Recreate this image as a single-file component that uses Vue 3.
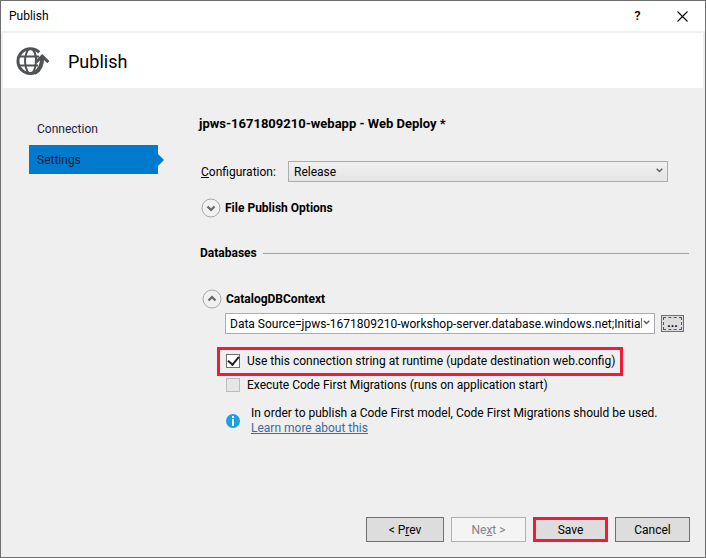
<template>
	<div class="dialog">
		<div class="titlebar">
			<span class="caption">Publish</span>
			<button class="caption_btn" type="button" aria-label="Help">?</button>
			<button class="caption_btn" type="button" aria-label="Close">
				<svg width="11" height="11" viewBox="0 0 11 11">
					<path d="M.5.5l10 10M10.5.5l-10 10" fill="none" stroke="#000" stroke-width="1.1" />
				</svg>
			</button>
		</div>

		<header class="banner">
			<svg class="globe" width="34" height="30" viewBox="0 0 34 30" fill="none" stroke="#505254">
				<path d="M23.200 6.400A12.400 12.400 0 1 0 23 24" stroke-width="3" />
				<path d="M12.500 3c-4.600 7-4.600 17 0 24M16.500 3c2.400 2.600 3.200 5 3.400 9M16.500 27c2.400-3 3.600-7 3.500-15" stroke-width="2" />
				<path d="M3 10.500h20M3 19.500h19" stroke-width="2" />
				<path d="M18.500 27c5.500-3 7.700-8 7.700-15.500" stroke-width="4" />
				<path d="M20 16.200l6.200-6 6.200 6" stroke-width="3" />
			</svg>
			<h1>Publish</h1>
		</header>

		<div class="body">
			<nav class="sidebar">
				<a
					v-for="page in pages"
					:key="page"
					href="#"
					:class="{ active: page === current }"
					@click.prevent="current = page"
				>{{ page }}</a>
			</nav>

			<main class="content">
				<h2>jpws-1671809210-webapp - Web Deploy *</h2>

				<div class="config_row">
					<label for="configuration"><u>C</u>onfiguration:</label>
					<div class="combo shaded">
						<select id="configuration" v-model="configuration">
							<option>Release</option>
							<option>Debug</option>
						</select>
						<svg class="arrow" width="7" height="5" viewBox="0 0 7 5">
							<path d="M.7.8l2.800 2.800L6.300.8" fill="none" stroke="#606060" stroke-width="1.400" />
						</svg>
					</div>
				</div>

				<button class="expander" type="button">
					<svg width="20" height="20" viewBox="0 0 20 20" fill="none">
						<circle cx="10" cy="10" r="9" fill="#f1f1f1" stroke="#a9a9a9" />
						<path d="M6.500 8.500l3.500 3.500 3.500-3.500" stroke="#666" stroke-width="2.200" />
					</svg>
					File Publish Options
				</button>

				<div class="group_title">
					<h3>Databases</h3>
					<hr />
				</div>

				<section class="database">
					<button class="expander" type="button">
						<svg width="20" height="20" viewBox="0 0 20 20" fill="none">
							<circle cx="10" cy="10" r="9" fill="#f1f1f1" stroke="#a9a9a9" />
							<path d="M6.500 11.500L10 8l3.500 3.500" stroke="#666" stroke-width="2.200" />
						</svg>
						CatalogDBContext
					</button>

					<div class="connection_row">
						<div class="combo">
							<select v-model="connection" aria-label="Connection string">
								<option>{{ connection }}</option>
							</select>
							<svg class="arrow" width="7" height="5" viewBox="0 0 7 5">
								<path d="M.7.8l2.800 2.800L6.300.8" fill="none" stroke="#606060" stroke-width="1.400" />
							</svg>
						</div>
						<button class="browse" type="button"><span>...</span></button>
					</div>

					<label class="check marked">
						<input v-model="useAtRuntime" type="checkbox" />
						Use this connection string at runtime (update destination web.config)
					</label>
					<label class="check">
						<input type="checkbox" disabled />
						Execute Code First Migrations (runs on application start)
					</label>

					<div class="info">
						<svg width="14" height="14" viewBox="0 0 14 14">
							<circle cx="7" cy="7" r="7" fill="#1ba1e2" />
							<path d="M6 2h2v2H6zM6 5h2v7H6z" fill="#fff" />
						</svg>
						<div>
							<p>In order to publish a Code First model, Code First Migrations should be used.</p>
							<a href="#">Learn more about this</a>
						</div>
					</div>
				</section>
			</main>
		</div>

		<footer class="actions">
			<button class="prev" type="button">&lt; P<u>r</u>ev</button>
			<button type="button" disabled>Ne<u>x</u>t &gt;</button>
			<button class="save" type="button">Save</button>
			<button type="button">Cancel</button>
		</footer>
	</div>
</template>

<script setup>
import { ref } from 'vue';

const pages = ['Connection', 'Settings'];
const current = ref('Settings');
const configuration = ref('Release');
const connection = ref('Data Source=jpws-1671809210-workshop-server.database.windows.net;Initial');
const useAtRuntime = ref(true);
</script>

<style>
body {
	margin: 0;
}
</style>

<style scoped>
* {
	box-sizing: border-box;
}

.dialog {
	min-height: 100vh;
	display: flex;
	flex-direction: column;
	border: 1px solid #6e6e6e;
	background: #efefef;
	color: #000;
	font-family: 'Segoe UI', Roboto, sans-serif;
	font-size: 12px;
	line-height: 16px;
}

button,
select {
	font: inherit;
	color: inherit;
}

h1,
h2,
h3,
p {
	margin: 0;
}

.titlebar {
	height: 30px;
	display: flex;
	align-items: center;
	padding-left: 8px;
	background: #fff;
}

.caption {
	flex: 1;
}

.caption_btn {
	width: 45px;
	height: 30px;
	padding: 0;
	border: 0;
	background: none;
	display: flex;
	align-items: center;
	justify-content: center;
	font-size: 13px;
	font-weight: 500;
}

.banner {
	height: 55px;
	margin: 2px 2px 0;
	display: flex;
	align-items: center;
	gap: 18px;
	padding-left: 13px;
	background: #fff;
}

.banner h1 {
	padding-top: 2px;
	font-size: 18px;
	line-height: 24px;
	font-weight: 400;
}

.body {
	flex: 1;
	display: flex;
	gap: 41px;
	padding: 26px 16px 0 28px;
}

.sidebar {
	flex: none;
	width: 129px;
}

.sidebar a {
	display: block;
	position: relative;
	padding: 7px 8px 8px;
	color: #1e1e3c;
	text-decoration: none;
}

.sidebar a.active {
	padding: 7px 8px 6px;
	background: #007acc;
}

.sidebar a.active::after {
	content: '';
	position: absolute;
	left: 100%;
	top: 9px;
	border: 6px solid transparent;
	border-left-color: #007acc;
	border-right: 0;
}

.content {
	flex: 1;
	min-width: 0;
}

.content h2 {
	font-size: 13px;
	line-height: 20px;
	font-weight: 700;
}

.config_row {
	display: flex;
	align-items: center;
	margin: 27px 21px 0 2px;
}

.config_row label {
	width: 87px;
}

.combo {
	position: relative;
	flex: 1;
	min-width: 0;
	height: 21px;
}

.combo select {
	appearance: none;
	display: block;
	width: 100%;
	height: 21px;
	padding: 0 12px 0 4px;
	border: 1px solid #acacac;
	border-radius: 0;
	background: #fff;
}

.combo.shaded select {
	padding-left: 5px;
	background: linear-gradient(#f0f0f0, #e5e5e5);
}

.combo .arrow {
	position: absolute;
	right: 5px;
	top: 7px;
	pointer-events: none;
}

.expander {
	display: flex;
	align-items: center;
	gap: 4px;
	padding: 0;
	border: 0;
	background: none;
	font-weight: 700;
}

.content > .expander {
	margin: 16px 0 0 2px;
}

.group_title {
	display: flex;
	align-items: center;
	gap: 6px;
	margin-top: 27px;
	padding-left: 1px;
}

.group_title h3 {
	font-size: 12px;
	line-height: 16px;
	font-weight: 700;
}

.group_title hr {
	flex: 1;
	margin: 0;
	border: 0;
	border-top: 1px solid #a0a0a0;
}

.database {
	margin: 28px 5px 0 3px;
}

.connection_row {
	display: flex;
	align-items: center;
	gap: 6px;
	margin: 4px 0 13px 23px;
}

.browse {
	width: 23px;
	height: 17px;
	padding: 1px;
	border: 1px solid #707070;
	background: #ddd;
}

.browse span {
	display: block;
	height: 13px;
	border: 1px dashed #555;
	line-height: 11px;
	font-weight: 700;
}

.check {
	display: flex;
	align-items: center;
	gap: 7px;
	margin: 1px 0 0 24px;
}

.check.marked {
	width: fit-content;
	height: 29px;
	margin: 0 0 0 15px;
	padding: 0 5px 2px 6px;
	border: 3px solid #ee1c3a;
}

.check input {
	appearance: none;
	flex: none;
	width: 14px;
	height: 14px;
	margin: 0;
	border: 1px solid #707070;
	background: #fff;
	display: flex;
	align-items: center;
	justify-content: center;
}

.check input:checked::before {
	content: '';
	width: 5px;
	height: 9px;
	margin-bottom: 2px;
	border: solid #212121;
	border-width: 0 2px 2px 0;
	transform: rotate(40deg);
}

.check input:disabled {
	border-color: #bcbcbc;
	background: #e6e6e6;
}

.info {
	display: flex;
	align-items: center;
	gap: 11px;
	margin: 13px 0 0 24px;
	line-height: 15px;
}

.info svg {
	flex: none;
}

.info a {
	color: #3a6a9e;
}

.actions {
	display: flex;
	justify-content: flex-end;
	gap: 7px;
	padding: 0 15px 15px;
}

.actions button {
	width: 75px;
	height: 25px;
	padding: 0;
	border: 1px solid #707070;
	background: #ddd;
}

.actions .prev {
	width: 78px;
}

.actions button:disabled {
	border-color: #adb2b5;
	background: #f4f4f4;
	color: #838383;
}

.actions .save {
	border: 3px solid #ee1c3a;
}
</style>
